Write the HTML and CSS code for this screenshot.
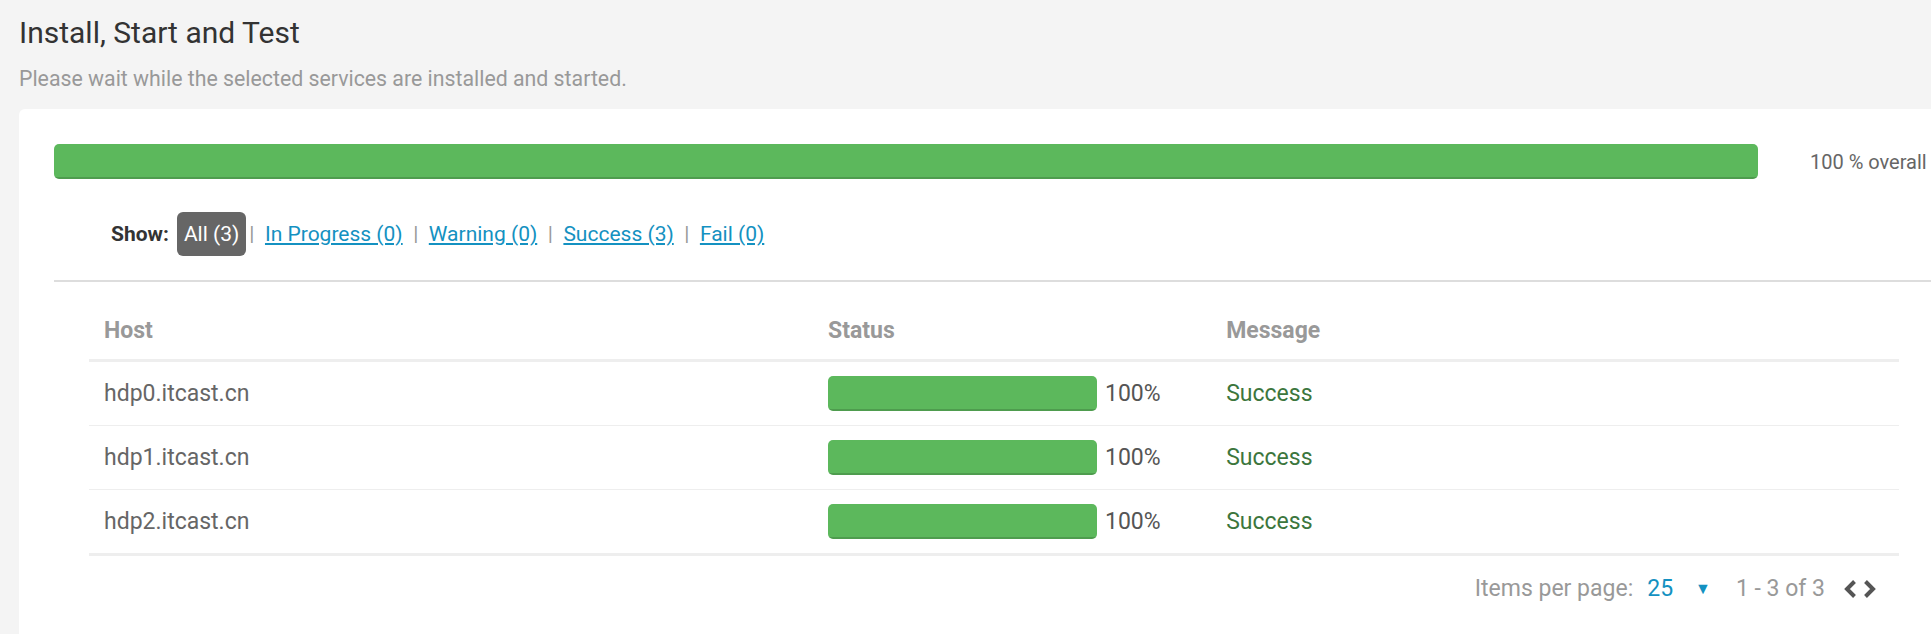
FILE: index.html
```html
<html>
<head>
    <link rel="stylesheet" href="styles.css">
</head>
<body>
    <div class="page">
        <h2 class="title">Install, Start and Test</h2>
        <p class="subtitle">Please wait while the selected services are installed and started.</p>

        <div class="card">
            <div class="overall">
                <div class="progress overall-bar">
                    <div class="progress-bar" style="width: 100%"></div>
                </div>
                <span class="overall-text">100 % overall</span>
            </div>

            <div class="filter">
                <span class="filter-label">Show:</span>
                <span class="filter-active">All (3)</span>
                <span class="sep sep-first">|</span>
                <a href="#">In Progress (0)</a>
                <span class="sep">|</span>
                <a href="#">Warning (0)</a>
                <span class="sep">|</span>
                <a href="#">Success (3)</a>
                <span class="sep">|</span>
                <a href="#">Fail (0)</a>
            </div>

            <div class="divider"></div>

            <table class="hosts">
                <thead>
                    <tr>
                        <th class="col-host">Host</th>
                        <th class="col-status">Status</th>
                        <th class="col-message">Message</th>
                    </tr>
                </thead>
                <tbody>
                    <tr>
                        <td>hdp0.itcast.cn</td>
                        <td>
                            <div class="status">
                                <div class="progress row-bar"><div class="progress-bar" style="width: 100%"></div></div>
                                <span>100%</span>
                            </div>
                        </td>
                        <td class="msg-ok">Success</td>
                    </tr>
                    <tr>
                        <td>hdp1.itcast.cn</td>
                        <td>
                            <div class="status">
                                <div class="progress row-bar"><div class="progress-bar" style="width: 100%"></div></div>
                                <span>100%</span>
                            </div>
                        </td>
                        <td class="msg-ok">Success</td>
                    </tr>
                    <tr>
                        <td>hdp2.itcast.cn</td>
                        <td>
                            <div class="status">
                                <div class="progress row-bar"><div class="progress-bar" style="width: 100%"></div></div>
                                <span>100%</span>
                            </div>
                        </td>
                        <td class="msg-ok">Success</td>
                    </tr>
                </tbody>
            </table>

            <div class="pager">
                <span>Items per page:</span>
                <span class="per-page">25</span>
                <span class="caret">&#9660;</span>
                <span class="range">1 - 3 of 3</span>
                <span class="arrows">
                    <svg width="14" height="22" viewBox="0 0 14 22"><path d="M11.5 3.5 L4 11 L11.5 18.5" fill="none" stroke="#555" stroke-width="4"/></svg>
                    <svg width="14" height="22" viewBox="0 0 14 22"><path d="M2.5 3.5 L10 11 L2.5 18.5" fill="none" stroke="#555" stroke-width="4"/></svg>
                </span>
            </div>
        </div>
    </div>
</body>
</html>
```

FILE: styles.css
```css
body { margin: 0; background: #f4f4f4; font-family: Roboto, "Liberation Sans", sans-serif; overflow: hidden; }
.page { padding: 13px 0 0 19px; }
.title { margin: 0; font-size: 30px; font-weight: 400; line-height: 40px; color: #333; }
.subtitle { margin: 11px 0 16px; font-size: 21.3px; line-height: 29px; color: #999; }

.card { width: 1880px; background: #fff; border-radius: 6px 0 0 0; padding: 35px 35px 80px; }

.overall { display: flex; align-items: center; }
.overall-bar { flex: 0 0 1704px; height: 35px; }
.overall-text { margin-left: 52px; font-size: 20px; color: #666; white-space: nowrap; }

.progress { background: #f5f5f5; border-radius: 5px; overflow: hidden; }
.progress-bar { height: 100%; background: #5cb85c; box-shadow: inset 0 -2px 0 rgba(0, 0, 0, 0.15); }

.filter { display: flex; align-items: center; margin-top: 33px; padding-left: 57px; font-size: 21px; line-height: 30px; }
.filter-label { font-weight: 700; color: #333; margin-right: 8px; }
.filter-active { background: #666; color: #fff; border-radius: 6px; padding: 7px 7px; }
.filter a { color: #1491c1; text-decoration: underline; }
.sep { color: #999; margin: 0 10.5px; }
.sep-first { margin-left: 3px; }

.divider { height: 2px; background: #ddd; margin-top: 24px; }

.hosts { width: 1810px; margin: 17px 35px 0; border-collapse: collapse; font-size: 23px; line-height: 33px; }
.hosts th { text-align: left; font-weight: 700; color: #999; padding: 15px 15px 12px; border-bottom: 3px solid #eee; }
.hosts td { color: #666; padding: 14px 15px; border-top: 1px solid #eee; }
.hosts tbody tr:last-child td { border-bottom: 3px solid #eee; }
.col-host { width: 40%; }
.col-status { width: 22%; }
.status { display: flex; align-items: center; color: #555; }
.row-bar { width: 269px; height: 35px; margin-right: 8px; }
.msg-ok { color: #3c763d !important; }

.pager { display: flex; justify-content: flex-end; align-items: center; margin: 16px 35px 0; padding-right: 22px; font-size: 23px; line-height: 33px; color: #999; }
.per-page { color: #1491c1; margin-left: 14px; }
.caret { color: #1491c1; font-size: 16px; margin-left: 22px; }
.range { margin-left: 25px; }
.arrows { display: flex; gap: 6px; margin-left: 18px; }
```
